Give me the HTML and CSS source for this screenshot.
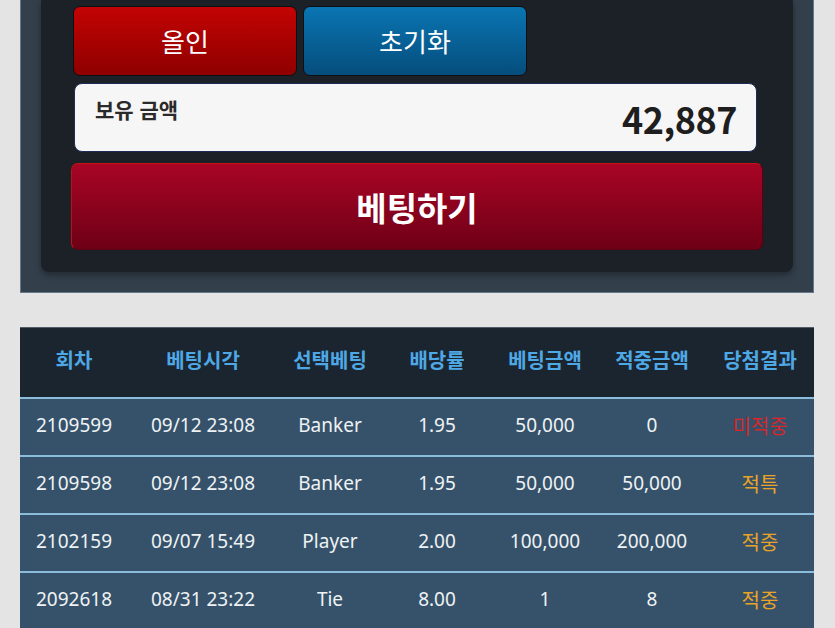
FILE: index.html
```html
<!DOCTYPE html>
<html lang="ko">
<head>
<meta charset="utf-8">
<title>베팅</title>
<link rel="stylesheet" href="styles.css">
</head>
<body>
<div class="page">
  <section class="outer">
    <div class="inner">
      <div class="btn-row">
        <button class="btn btn-red">올인</button>
        <button class="btn btn-blue">초기화</button>
      </div>
      <div class="balance">
        <span class="balance-label">보유 금액</span>
        <span class="balance-value">42,887</span>
      </div>
      <button class="bet-btn">베팅하기</button>
    </div>
  </section>

  <table class="history">
    <colgroup>
      <col class="c1"><col class="c2"><col class="c3"><col class="c4"><col class="c5"><col class="c6"><col class="c7">
    </colgroup>
    <thead>
      <tr>
        <th>회차</th><th>베팅시각</th><th>선택베팅</th><th>배당률</th><th>베팅금액</th><th>적중금액</th><th>당첨결과</th>
      </tr>
    </thead>
    <tbody>
      <tr>
        <td>2109599</td><td>09/12 23:08</td><td>Banker</td><td>1.95</td><td>50,000</td><td>0</td><td class="lose">미적중</td>
      </tr>
      <tr>
        <td>2109598</td><td>09/12 23:08</td><td>Banker</td><td>1.95</td><td>50,000</td><td>50,000</td><td class="win">적특</td>
      </tr>
      <tr>
        <td>2102159</td><td>09/07 15:49</td><td>Player</td><td>2.00</td><td>100,000</td><td>200,000</td><td class="win">적중</td>
      </tr>
      <tr>
        <td>2092618</td><td>08/31 23:22</td><td>Tie</td><td>8.00</td><td>1</td><td>8</td><td class="win">적중</td>
      </tr>
    </tbody>
  </table>
</div>
</body>
</html>
```

FILE: styles.css
```css
html, body {
  margin: 0;
  padding: 0;
  background: #e4e4e4;
  font-family: "Noto Sans", "Noto Sans CJK KR", sans-serif;
  overflow: hidden;
}

.page {
  padding: 0 21px 0 20px;
}

.outer {
  background: #333f4b;
  border: 1px solid #66798a;
  border-top: none;
  padding: 0 20px 20px 20px;
}

.inner {
  background: #1c2128;
  border-radius: 0 0 8px 8px;
  box-shadow: 0 3px 6px rgba(0, 0, 0, 0.35);
  padding: 6px 30px 22px 30px;
  display: flex;
  flex-direction: column;
}

.btn-row {
  display: flex;
  gap: 6px;
  margin-left: 2px;
}

.btn {
  width: 224px;
  height: 70px;
  border: 1px solid #0e0f12;
  border-radius: 7px;
  color: #ffffff;
  font-family: "Noto Sans CJK KR", sans-serif;
  font-size: 26px;
  font-weight: 400;
  padding: 0 0 2px 0;
}

.btn-red {
  background: linear-gradient(#c30303, #8e0000);
}

.btn-blue {
  background: linear-gradient(#0a75b2, #054d7c);
}

.balance {
  margin: 7px 6px 0 3px;
  height: 67px;
  background: #f6f6f6;
  border: 1px solid #1f2c58;
  border-radius: 8px;
  display: flex;
  align-items: center;
  justify-content: space-between;
  padding: 0 19px 0 20px;
}

.balance-label {
  font-family: "Noto Sans CJK KR", sans-serif;
  font-weight: 700;
  font-size: 21px;
  color: #2a2a2a;
  margin-top: -18px;
}

.balance-value {
  font-family: "Noto Sans CJK KR", sans-serif;
  font-weight: 700;
  font-size: 36px;
  color: #1e1e1e;
  letter-spacing: -0.5px;
}

.bet-btn {
  margin-top: 11px;
  height: 87px;
  background: linear-gradient(#a90525, #6e0016);
  border: 1px solid #5a0010;
  border-top-color: #c81018;
  border-left-color: #c01018;
  border-radius: 7px;
  color: #ffffff;
  font-family: "Noto Sans CJK KR", sans-serif;
  font-weight: 700;
  font-size: 33px;
  padding: 0;
}

.history {
  margin-top: 34px;
  width: 794px;
  border-collapse: collapse;
  table-layout: fixed;
}

.c1 { width: 108px; }
.c2 { width: 150px; }
.c3 { width: 104px; }
.c4 { width: 110px; }
.c5 { width: 106px; }
.c6 { width: 108px; }
.c7 { width: 108px; }

.history thead tr {
  background: #1b252f;
  border-top: 1px solid #505c68;
}

.history th {
  height: 62px;
  padding: 0 0 7px 0;
  color: #4ea8e6;
  font-family: "Noto Sans CJK KR", sans-serif;
  font-weight: 700;
  font-size: 20px;
  letter-spacing: 0;
  text-align: center;
}

.history tbody tr {
  background: #36526a;
  border-top: 2.5px solid #8bbcd9;
}

.history td {
  height: 52px;
  padding: 0 0 4px 0;
  text-align: center;
  color: #eef2f5;
  font-size: 19px;
  font-weight: 400;
}

.history td.lose {
  color: #d8262a;
  font-family: "Noto Sans CJK KR", sans-serif;
  font-size: 20px;
}

.history td.win {
  color: #e9a327;
  font-family: "Noto Sans CJK KR", sans-serif;
  font-size: 20px;
}
```
